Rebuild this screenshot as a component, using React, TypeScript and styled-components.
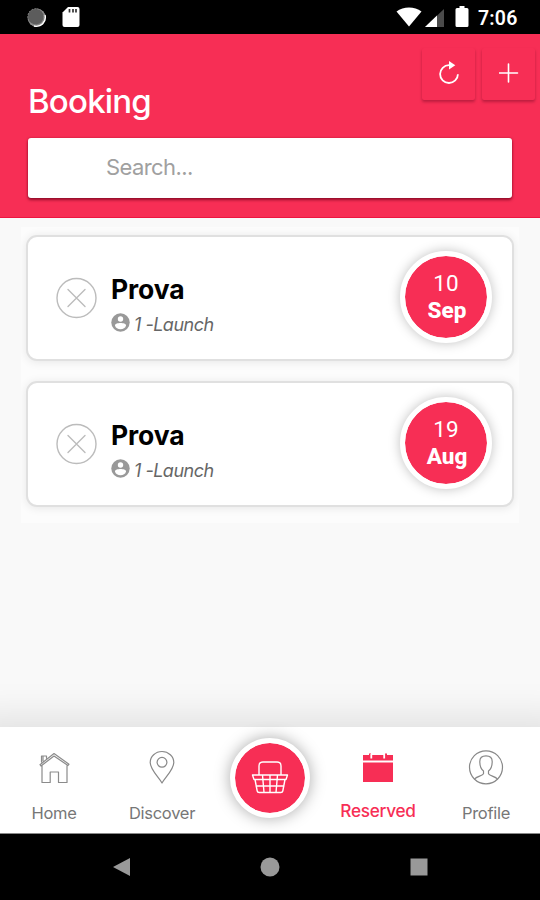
import React from "react";
import styled, { createGlobalStyle } from "styled-components";

const RED = "#f72e55";

const GlobalStyle = createGlobalStyle`
  * { box-sizing: border-box; }
  body { margin: 0; background: #f9f9f9; }
  button { font: inherit; border: 0; padding: 0; cursor: pointer; }
`;

const Screen = styled.div`
  width: 540px;
  height: 900px;
  display: flex;
  flex-direction: column;
  overflow: hidden;
  background: #f9f9f9;
  font-family: Inter, Roboto, sans-serif;
`;

const StatusBar = styled.div`
  flex: 0 0 34px;
  display: flex;
  align-items: center;
  justify-content: space-between;
  padding: 0 22px 0 26px;
  background: #000;
`;

const StatusGroup = styled.div`
  display: flex;
  align-items: center;
`;

const StatusLeft = styled(StatusGroup)`
  gap: 15px;
`;

const Clock = styled.span`
  margin-left: 7px;
  padding-top: 3px;
  width: 40px;
  white-space: nowrap;
  color: #fff;
  font: 600 19.5px/24px Roboto, sans-serif;
  letter-spacing: 0.2px;
`;

const Header = styled.header`
  flex: 0 0 184px;
  display: flex;
  flex-direction: column;
  background: ${RED};
  border-bottom: 1px solid #ed1540;
`;

const Actions = styled.div`
  height: 67px;
  display: flex;
  justify-content: flex-end;
  gap: 7px;
  padding: 14px 5px 0 0;
`;

const ActionButton = styled.button`
  width: 53px;
  height: 52px;
  display: grid;
  place-items: center;
  background: ${RED};
  border-radius: 2px;
  box-shadow: 0 2px 3px rgba(90, 0, 25, 0.38);

  svg { margin-bottom: 3px; }
`;

const Title = styled.h1`
  margin: -20px 0 0 28px;
  height: 40px;
  color: #fff;
  font-size: 33px;
  font-weight: 500;
  line-height: 40px;
  letter-spacing: -0.8px;
`;

const SearchBox = styled.div`
  height: 60px;
  margin: 17px 28px 0;
  display: flex;
  align-items: center;
  padding: 0 0 2px 78px;
  background: #fff;
  border-radius: 3px;
  box-shadow: 0 2px 3px rgba(110, 0, 25, 0.7), 0 0 2px rgba(130, 0, 25, 0.5);
  color: #a0a0a0;
  font-size: 22px;
  letter-spacing: -0.6px;
`;

const List = styled.main`
  flex: 1;
  display: flex;
  flex-direction: column;
  align-items: center;
  padding-top: 9px;
`;

const Row = styled.div`
  width: 498px;
  height: 146px;
  padding: 8px 5px 0;
  overflow: hidden;
  background: #fcfcfc;

  &:last-child { height: 150px; }
`;

const Card = styled.article`
  height: 126px;
  display: flex;
  align-items: center;
  padding: 0 20px 0 28px;
  background: #fff;
  border: 2px solid #e0e0e0;
  border-radius: 11px;
  box-shadow: 0 1px 10px rgba(0, 0, 0, 0.09);
`;

const Details = styled.div`
  flex: 1;
  padding: 19px 0 0 13px;
`;

const Name = styled.h2`
  margin: 0;
  color: #000;
  font-size: 26.5px;
  font-weight: 700;
  line-height: 34px;
  letter-spacing: -0.1px;
`;

const Party = styled.div`
  height: 38px;
  display: flex;
  align-items: center;
  gap: 4px;
  color: #666;
  font-size: 18px;
  font-style: italic;
  letter-spacing: -0.5px;
  white-space: pre;

  svg { margin-top: -4px; }
`;

const DateBadge = styled.div`
  width: 92px;
  height: 92px;
  margin-top: -2px;
  display: flex;
  flex-direction: column;
  align-items: center;
  justify-content: center;
  border: 5px solid #fff;
  border-radius: 50%;
  background: ${RED};
  background-clip: padding-box;
  box-shadow: 0 0 12px rgba(0, 0, 0, 0.25);
  color: #fff;
  font: 400 22.5px/27px Roboto, sans-serif;

  strong { font-weight: 800; font-size: 22.5px; letter-spacing: 0; padding-left: 2px; }
`;

const TabBar = styled.nav`
  flex: 0 0 106px;
  display: grid;
  grid-template-columns: repeat(5, 1fr);
  background: #fff;
  box-shadow: 0 24px 38px 32px rgba(0, 0, 0, 0.11);
  clip-path: inset(-50px 0 0 0);
`;

const Tab = styled.div<{ $active?: boolean }>`
  display: flex;
  flex-direction: column;
  align-items: center;
  padding-top: 20px;
  color: ${({ $active }) => ($active ? RED : "#777")};
  font-size: ${({ $active }) => ($active ? 17.2 : 16.5)}px;
  font-weight: ${({ $active }) => ($active ? 500 : 400)};
  line-height: 22px;
  letter-spacing: -0.28px;

  span { margin-top: ${({ $active }) => ($active ? 11 : 13)}px; }
`;

const BasketTab = styled.div`
  display: flex;
  justify-content: center;
  padding-top: 11px;
`;

const BasketButton = styled.button`
  width: 80px;
  height: 80px;
  flex: none;
  display: grid;
  place-items: center;
  border: 5px solid #fff;
  border-radius: 50%;
  background: ${RED};
  background-clip: padding-box;
  box-shadow: 0 0 16px rgba(0, 0, 0, 0.34);

  svg { margin-bottom: 3px; }
`;

const SystemNav = styled.footer`
  flex: 0 0 67px;
  display: flex;
  align-items: center;
  padding: 0 111px 1px 112px;
  justify-content: space-between;
  border-top: 1px solid #888;
  background: #000;
`;

const line = { fill: "none", stroke: "currentColor", strokeLinecap: "round", strokeLinejoin: "round" } as const;

const Spinner = () => (
  <svg width="21" height="21" viewBox="0 0 21 21">
    <circle cx="10.7" cy="10.7" r="9.1" fill="#909090" />
    <path d="M19 8A9 9 0 0 1 8 19" fill="none" stroke="#fff" strokeWidth="1.4" />
    <circle cx="9.8" cy="9.7" r="8" fill="#5c5c5c" stroke="#858585" strokeDasharray="1.5 1.5" />
  </svg>
);

const SdCard = () => (
  <svg width="18" height="22" viewBox="0 0 18 22">
    <path d="M6 1h9.500Q17.500 1 17.500 3v16q0 2-2 2H2.500q-2 0-2-2V6.500z" fill="#fff" />
    <path d="M7.500 3v3.500M11 3v3.500M14 3v3.500" stroke="#333" strokeWidth="1.700" />
  </svg>
);

const StatusIcons = () => (
  <svg width="76" height="24" viewBox="0 0 76 24">
    <path d="M1.500 6.500C8.500 1.300 19.500 1.300 26.500 6.500L14 21.500z" fill="#fff" />
    <path d="M49 4v18H30z" fill="#4b4b4b" />
    <path d="M42 10.500V22H30z" fill="#fff" />
    <path d="M64.500 1h5v2h2.500q1.500 0 1.500 1.500v16q0 1.500-1.500 1.500H62q-1.500 0-1.500-1.500v-16Q60.500 3 62 3H64.500z" fill="#fff" />
  </svg>
);

const Refresh = () => (
  <svg width="24" height="26" viewBox="0 0 24 26" color="#fff">
    <path d="M13.500 5.200H12a8.900 8.900 0 1 0 8.900 9" {...line} strokeLinecap="butt" strokeWidth="1.800" />
    <path d="M12 1l6.300 4.300-6.300 4.200z" fill="#fff" />
  </svg>
);

const Plus = () => (
  <svg width="20" height="20" viewBox="0 0 20 20" color="#fff">
    <path d="M9.500 1v18M.500 10h18" {...line} strokeWidth="1.600" />
  </svg>
);

const Cancel = () => (
  <svg width="42" height="42" viewBox="0 0 42 42" color="#bcbcbc">
    <circle cx="20.500" cy="21" r="19.500" {...line} strokeWidth="1.400" />
    <path d="M12 12.500l17 17M29 12.500L12 29.500" {...line} strokeWidth="1.400" />
  </svg>
);

const Person = () => (
  <svg width="19" height="19" viewBox="0 0 19 19">
    <circle cx="9.500" cy="9.500" r="9.200" fill="#999" />
    <circle cx="9.500" cy="6" r="2.700" fill="#fff" />
    <path d="M4 12.500c0-3.200 11-3.200 11 0-1 5-10 5-11 0z" fill="#fff" />
  </svg>
);

const Home = () => (
  <svg width="42" height="42" viewBox="0 0 42 42" {...line} stroke="#8b8b8b" strokeWidth="1.200">
    <path d="M7 17.700L21 6.500l15 10.700-1 1.300L21 9 8 19zM8.500 15V9h5v2.200M10 9v4.800M9 18.800V35.500h8.200V25h8.300v10.500h8.500V18.500" />
  </svg>
);

const Pin = () => (
  <svg width="42" height="42" viewBox="0 0 42 42" {...line} stroke="#888" strokeWidth="1.200">
    <path d="M21 36C17.500 30 9.200 22.500 9.200 15.500a11.800 11 0 0 1 23.600 0C32.800 22.500 24.500 30 21 36z" />
    <circle cx="21" cy="15.300" r="4.900" />
  </svg>
);

const Calendar = () => (
  <svg width="42" height="42" viewBox="0 0 42 42" fill="currentColor">
    <path d="M6 8h6V6.500h2V8h14V6.500h2V8h6v5.500H6zM6 15.500h30V35H6z" />
    <path d="M14.300 7v4.500M27.200 7v4.500" stroke="#fff" strokeWidth="1.800" />
  </svg>
);

const Profile = () => (
  <svg width="42" height="42" viewBox="0 0 42 42" {...line} stroke="#888" strokeWidth="1.200">
    <circle cx="21" cy="20.300" r="16.500" />
    <path d="M9.700 32c1.500-2.700 7.800-3.100 8.800-5.200V24c-2.800-2-3.700-5.700-3.700-9.500 0-3.600 2.600-5.700 6.200-5.700s6.200 2.100 6.200 5.700c0 3.800-.9 7.500-3.700 9.500v2.800c1 2.100 7.300 2.500 8.800 5.200" />
  </svg>
);

const Basket = () => (
  <svg width="38" height="36" viewBox="0 0 38 36" color="#fff" {...line} strokeWidth="1.400">
    <path d="M8 16V7q0-4 4-4h14q4 0 4 4v9M1.500 16h35l-1.500 4.500H3zM4 20.500l2.200 11.500q.3 1.500 2 1.500h21.600q1.700 0 2-1.500l2.200-11.500M5 27h28M11.500 16l1.500 17.500M26.500 16l-1.500 17.500M19 16v17.500" />
  </svg>
);

const bookings = [
  { name: "Prova", party: "1 -Launch", day: "10", month: "Sep" },
  { name: "Prova", party: "1 -Launch", day: "19", month: "Aug" },
];

export default function App() {
  return (
    <>
      <GlobalStyle />
      <Screen>
        <StatusBar>
          <StatusLeft><Spinner /><SdCard /></StatusLeft>
          <StatusGroup><StatusIcons /><Clock>7:06</Clock></StatusGroup>
        </StatusBar>
        <Header>
          <Actions>
            <ActionButton aria-label="Refresh"><Refresh /></ActionButton>
            <ActionButton aria-label="Add"><Plus /></ActionButton>
          </Actions>
          <Title>Booking</Title>
          <SearchBox>Search...</SearchBox>
        </Header>
        <List>
          {bookings.map((b) => (
            <Row key={b.day}>
              <Card>
                <Cancel />
                <Details>
                  <Name>{b.name}</Name>
                  <Party><Person />{b.party}</Party>
                </Details>
                <DateBadge><span>{b.day}</span><strong>{b.month}</strong></DateBadge>
              </Card>
            </Row>
          ))}
        </List>
        <TabBar>
          <Tab><Home /><span>Home</span></Tab>
          <Tab><Pin /><span>Discover</span></Tab>
          <BasketTab><BasketButton aria-label="Basket"><Basket /></BasketButton></BasketTab>
          <Tab $active><Calendar /><span>Reserved</span></Tab>
          <Tab><Profile /><span>Profile</span></Tab>
        </TabBar>
        <SystemNav>
          <svg width="19" height="20" viewBox="0 0 19 20"><path d="M1 10L18 1v18z" fill="#999" /></svg>
          <svg width="20" height="20" viewBox="0 0 20 20"><circle cx="10" cy="10" r="9.500" fill="#999" /></svg>
          <svg width="20" height="20" viewBox="0 0 20 20"><path d="M1.500 1.500h17v17h-17z" fill="#999" /></svg>
        </SystemNav>
      </Screen>
    </>
  );
}
